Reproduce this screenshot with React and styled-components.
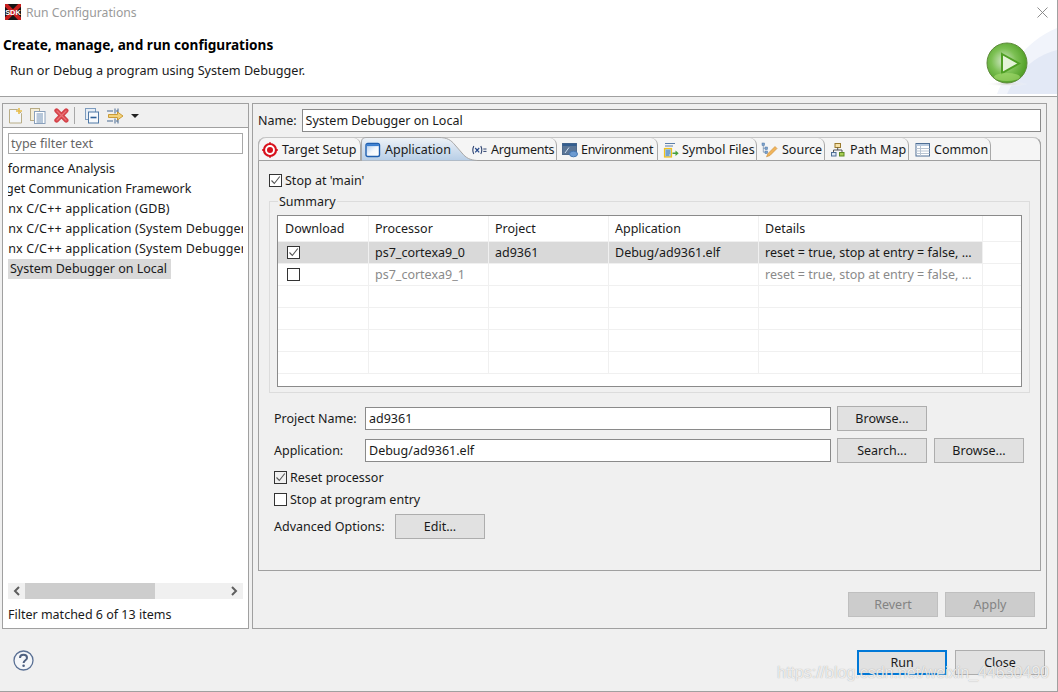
import React from "react";
import styled, { createGlobalStyle } from "styled-components";

const Global = createGlobalStyle`
  html, body { margin: 0; padding: 0; background: #f0f0f0; }
  #root { width: 1058px; height: 692px; overflow: hidden; }
  * { box-sizing: border-box; }
`;

const FONT = `"Noto Sans", "Open Sans", sans-serif`;

const Window = styled.div`
  position: relative;
  width: 1058px;
  height: 692px;
  display: flex;
  flex-direction: column;
  background: #f0f0f0;
  font: 12.5px/17px ${FONT};
  color: #1a1a1a;
  border-bottom: 1px solid #a0a0a0;
  border-right: 1px solid #a0a0a0;
`;

const TitleBar = styled.div`
  height: 28px;
  flex: none;
  display: flex;
  align-items: center;
  gap: 5px;
  padding: 0 0 4px 5px;
  background: #fff;
  color: #9a9a9a;
  font-size: 12.2px;
`;

const TitleText = styled.span`
  flex: 1;
`;

const CloseX = styled.svg`
  width: 11px;
  height: 11px;
  margin-right: 9px;
`;

const Banner = styled.div`
  position: relative;
  height: 69px;
  flex: none;
  padding: 8px 0 0 3px;
  background: #fff;
  border-bottom: 1px solid #a0a0a0;
  overflow: hidden;
`;

const BannerTitle = styled.div`
  font-weight: 700;
  font-size: 13.6px;
  color: #000;
  line-height: 17px;
`;

const BannerSub = styled.div`
  margin: 9px 0 0 7px;
  font-size: 12.65px;
  line-height: 17px;
`;

const BannerArt = styled.svg`
  position: absolute;
  right: 0;
  top: 0;
  width: 160px;
  height: 68px;
`;

const Body = styled.div`
  flex: none;
  height: 526px;
  margin-top: 6px;
  padding: 0 12px 0 2px;
  display: flex;
  gap: 3px;
`;

const LeftPanel = styled.div`
  width: 247px;
  flex: none;
  display: flex;
  flex-direction: column;
  background: #fff;
  border: 1px solid #a0a0a0;
`;

const Toolbar = styled.div`
  height: 24px;
  flex: none;
  display: flex;
  align-items: center;
  gap: 5px;
  padding: 0 0 0 6px;
  background: #f0f0f0;
  border-bottom: 1px solid #a0a0a0;
`;

const ToolSlot = styled.span`
  display: flex;
  align-items: center;
  flex: none;
  margin-left: ${(p) => p.$ml || 0}px;
`;

const ToolSep = styled.span`
  width: 1px;
  height: 17px;
  margin-right: 5px;
  background: #a8a8a8;
`;

const FilterBox = styled.div`
  height: 21px;
  margin: 5px 5px 0 5px;
  flex: none;
  padding: 0 2px;
  border: 1px solid #a9a9a9;
  color: #666;
  line-height: 19px;
  background: #fff;
`;

const Tree = styled.div`
  flex: 1;
  margin: 5px 5px 0 5px;
  overflow: hidden;
`;

const TreeRow = styled.div`
  height: 20px;
  line-height: 20px;
  white-space: nowrap;
  margin-left: ${(p) => p.$offset}px;
  letter-spacing: ${(p) => p.$spacing || 0}px;
`;

const SelectedLabel = styled.span`
  display: inline-block;
  height: 20px;
  padding: 0 4px 0 2px;
  background: #d9d9d9;
`;

const ScrollTrack = styled.div`
  position: relative;
  height: 16px;
  margin: 0 5px;
  padding: 0 5px;
  flex: none;
  display: flex;
  align-items: center;
  justify-content: space-between;
  background: #f0f0f0;
`;

const ScrollThumb = styled.div`
  position: absolute;
  left: 17px;
  width: 130px;
  height: 16px;
  background: #cdcdcd;
`;

const FilterStatus = styled.div`
  height: 29px;
  flex: none;
  padding: 7px 5px 0;
  line-height: 17px;
`;

const RightPanel = styled.div`
  flex: 1;
  display: flex;
  flex-direction: column;
  padding: 5px 5px 0 5px;
  border: 1px solid #a0a0a0;
`;

const NameRow = styled.div`
  display: flex;
  align-items: center;
  gap: 5px;
  height: 23px;
  flex: none;
`;

const Field = styled.div`
  flex: 1;
  height: 23px;
  padding: 0 3px;
  line-height: 21px;
  background: #fff;
  border: 1px solid #8a8a8a;
`;

const TabFolder = styled.div`
  flex: 1;
  margin-top: 5px;
  display: flex;
  flex-direction: column;
  border: 1px solid #a0a0a0;
  border-top: none;
  border-radius: 8px 8px 0 0;
`;

const TabStrip = styled.div`
  height: 24px;
  flex: none;
  display: flex;
  margin: 0 -1px;
  background: #f5f5f5;
  border-bottom: 1px solid #a0a0a0;
  border-top: 1px solid #c4c4c4;
  border-left: 1px solid #b4b4b4;
  border-right: 1px solid #a0a0a0;
  border-radius: 8px 8px 0 0;
`;

const Tab = styled.div`
  position: relative;
  flex: none;
  width: ${(p) => p.$w}px;
  height: 23px;
  display: flex;
  align-items: center;
  gap: ${(p) => p.$gap ?? 4}px;
  padding-left: ${(p) => p.$pad ?? 4}px;
  white-space: nowrap;
  letter-spacing: ${(p) => p.$ls || 0}px;
  border-right: 1px solid #a8a8a8;
  border-top-right-radius: 7px;
`;

const ActiveTab = styled(Tab)`
  border-right: none;
  margin-right: -15px;
`;

const ActiveShape = styled.svg`
  position: absolute;
  left: 0;
  top: -1px;
  width: 117px;
  height: 24px;
`;

const TabIconWrap = styled.span`
  position: relative;
  display: flex;
  align-items: center;
  gap: 4px;
`;

const Pane = styled.div`
  flex: 1;
  padding: 8px 10px 0 10px;
  display: flex;
  flex-direction: column;
`;

const CheckRow = styled.div`
  display: flex;
  align-items: center;
  gap: 3px;
  height: 22px;
  padding-left: ${(p) => p.$indent || 0}px;
  margin-top: ${(p) => p.$mt || 0}px;
  color: #1a1a1a;
`;

const Box = styled.span`
  width: 13px;
  height: 13px;
  flex: none;
  display: flex;
  align-items: center;
  justify-content: center;
  background: ${(p) => (p.$tinted ? "#f0f0f0" : "#fff")};
  border: 1px solid #333;
`;

const Group = styled.div`
  position: relative;
  margin-top: 10px;
  height: 192px;
  padding: 13px 7px 6px 7px;
  border: 1px solid #dcdcdc;
`;

const GroupLabel = styled.span`
  position: absolute;
  left: 8px;
  top: -9px;
  padding: 0 1px;
  background: #f0f0f0;
  line-height: 17px;
`;

const Table = styled.div`
  width: 745px;
  height: 172px;
  background: #fff;
  border: 1px solid #8a8a8a;
  overflow: hidden;
`;

const TableRow = styled.div`
  display: grid;
  grid-template-columns: 91px 120px 120px 150px 224px;
  height: ${(p) => p.$h || 22}px;
  border-bottom: 1px solid #f0f0f0;
  color: ${(p) => (p.$dim ? "#8a8a8a" : "#1a1a1a")};
`;

const Cell = styled.div`
  padding-left: ${(p) => p.$pad ?? 6}px;
  display: flex;
  align-items: center;
  white-space: nowrap;
  overflow: hidden;
  background: ${(p) => (p.$sel ? "#d9d9d9" : "transparent")};
  border-right: 1px solid #f0f0f0;
`;

const FormRow = styled.div`
  display: flex;
  align-items: center;
  height: 25px;
  padding-right: 6px;
  margin-top: ${(p) => p.$mt ?? 0}px;
`;

const FormLabel = styled.span`
  width: ${(p) => p.$w || 96}px;
  flex: none;
  padding-left: 5px;
`;

const ButtonGap = styled.span`
  width: 97px;
  flex: none;
`;

const Btn = styled.div`
  width: 90px;
  height: 25px;
  flex: none;
  display: flex;
  align-items: center;
  justify-content: center;
  margin-left: ${(p) => p.$ml ?? 0}px;
  background: ${(p) => (p.$off ? "#cccccc" : "#e1e1e1")};
  color: ${(p) => (p.$off ? "#838383" : "#1a1a1a")};
  border: ${(p) => (p.$primary ? "2px solid #0078d7" : p.$off ? "1px solid #bfbfbf" : "1px solid #adadad")};
`;

const PanelActions = styled.div`
  height: 57px;
  flex: none;
  display: flex;
  justify-content: flex-end;
  align-items: flex-start;
  gap: 7px;
  padding: 21px 6px 0 0;
`;

const Footer = styled.div`
  flex: 1;
  display: flex;
  align-items: flex-start;
  justify-content: space-between;
  padding: 21px 12px 0 13px;
`;

const FooterBtns = styled.div`
  display: flex;
  gap: 8px;
`;

const Watermark = styled.div`
  position: absolute;
  left: 777px;
  top: 664px;
  font: 16px/18px "Liberation Sans", sans-serif;
  color: rgba(255, 255, 255, 0.8);
  text-shadow: 0 0 1px rgba(110, 110, 110, 0.65);
  white-space: nowrap;
`;

const Icon = styled.svg`
  flex: none;
  display: block;
`;

const Check = () => (
  <svg width="11" height="11" viewBox="0 0 11 11">
    <path d="M1.5 5.5 L4.3 8.5 L9.8 1.5" fill="none" stroke="#555" strokeWidth="1.1" />
  </svg>
);

const TargetIcon = () => (
  <Icon width="16" height="16" viewBox="0 0 16 16">
    <circle cx="8" cy="8" r="6" fill="#fff" stroke="#d8111c" strokeWidth="2.2" />
    <circle cx="8" cy="8" r="3" fill="#d8111c" />
    <path d="M8 0v2M8 14v2M0 8h2M14 8h2" stroke="#d8111c" strokeWidth="1.3" />
  </Icon>
);

const AppIcon = () => (
  <Icon width="16" height="16" viewBox="0 0 16 16">
    <defs>
      <linearGradient id="appfill" x1="0" y1="0" x2="1" y2="1">
        <stop offset="0" stopColor="#a9c8ec" />
        <stop offset="0.55" stopColor="#f4f8fd" />
        <stop offset="1" stopColor="#ffffff" />
      </linearGradient>
    </defs>
    <rect x="1" y="1.5" width="13.5" height="13" rx="1.8" fill="url(#appfill)" stroke="#1f5fb0" strokeWidth="1.4" />
    <rect x="1.6" y="2.1" width="12.3" height="2" fill="#3a7ed0" />
  </Icon>
);

const ArgIcon = () => (
  <Icon width="16" height="16" viewBox="0 0 16 16">
    <path d="M2.8 4 Q0.8 8 2.8 12M9.8 4 Q11.8 8 9.8 12" fill="none" stroke="#2f4470" strokeWidth="1.1" />
    <path d="M4.2 6 L8.2 10.4M8.2 6 L4.2 10.4" stroke="#27498a" strokeWidth="1.2" />
    <path d="M12.3 7h3.2M12.3 9.4h3.2" stroke="#2f4470" />
  </Icon>
);

const EnvIcon = () => (
  <Icon width="16" height="16" viewBox="0 0 16 16">
    <rect x="0.5" y="1.5" width="14" height="11" fill="#5a7596" stroke="#4f6b8d" />
    <rect x="0.5" y="1.5" width="14" height="2.5" fill="#335d8e" />
    <path d="M3 11 L7 5.5" stroke="#cfe0f2" />
    <ellipse cx="11.5" cy="12" rx="4" ry="2.8" fill="#6d9bd1" stroke="#4678b2" />
  </Icon>
);

const SymbolIcon = () => (
  <Icon width="16" height="16" viewBox="0 0 16 16">
    <path d="M2 1.5h10M2 4h8" stroke="#5c7ea8" />
    <rect x="1.5" y="6.5" width="7" height="8.5" fill="#9cc4e8" stroke="#f3c21a" strokeWidth="1.2" />
    <path d="M3 9h4M3 11h4M3 13h3" stroke="#3e6ea8" strokeWidth="0.8" />
    <path d="M9.5 10.5h3V8.5l3.2 2.7-3.2 2.7v-2h-3z" fill="#49a03c" />
  </Icon>
);

const SourceIcon = () => (
  <Icon width="17" height="16" viewBox="0 0 17 16">
    <rect x="1" y="1" width="2.6" height="2.6" fill="#7ea3cc" stroke="#4f78a8" strokeWidth="0.5" />
    <rect x="4" y="5" width="2.6" height="2.6" fill="#7ea3cc" stroke="#4f78a8" strokeWidth="0.5" />
    <rect x="4" y="9" width="2.6" height="2.6" fill="#7ea3cc" stroke="#4f78a8" strokeWidth="0.5" />
    <path d="M2.3 3.5V10.2H4M2.3 6.3H4" fill="none" stroke="#6a87ab" strokeWidth="0.7" />
    <path d="M5.5 14.8 L7 11.5 L14 4.5 L16 6.5 L9 13.5 Z" fill="#f0b45a" stroke="#c98a35" strokeWidth="0.6" />
  </Icon>
);

const PathIcon = () => (
  <Icon width="16" height="16" viewBox="0 0 16 16">
    <rect x="5" y="1.5" width="5.5" height="4" fill="#f6e2a8" stroke="#9a7a2e" />
    <path d="M7.7 5.5V8M3.5 11V8H12V11" fill="none" stroke="#555" />
    <rect x="1.5" y="10.5" width="4.5" height="3.5" fill="#dbe6f2" stroke="#4f6f96" />
    <rect x="9.5" y="10.5" width="4.5" height="3.5" fill="#a8cc55" stroke="#5d8a1f" />
  </Icon>
);

const CommonIcon = () => (
  <Icon width="16" height="16" viewBox="0 0 16 16">
    <rect x="1" y="1.5" width="13.5" height="12.5" fill="#fff" stroke="#4f6f96" />
    <rect x="1.5" y="2" width="12.5" height="2" fill="#b9cbe0" />
    <path d="M1 6.5h13.5M1 9h13.5M1 11.5h13.5M5.5 4v10" stroke="#b8c4d2" />
  </Icon>
);

const NewIcon = () => (
  <Icon width="16" height="16" viewBox="0 0 16 16">
    <path d="M0.5 1.5h8l4 4v9.5h-12z" fill="#f4f7fb" stroke="#b9ad87" />
    <path d="M10 0v6M7 3h6" stroke="#e6bd4e" strokeWidth="1.6" />
  </Icon>
);

const DupIcon = () => (
  <Icon width="16" height="16" viewBox="0 0 16 16">
    <rect x="0.5" y="0.5" width="9" height="12" fill="#f3edd8" stroke="#b7ab85" />
    <rect x="4.5" y="3.5" width="10.5" height="12" fill="#fff" stroke="#8aa0bb" />
    <path d="M6.5 6h6.5M6.5 8h6.5M6.5 10h6.5M6.5 12h6.5M6.5 14h6.5" stroke="#6f8fb4" />
  </Icon>
);

const DeleteIcon = () => (
  <Icon width="15" height="15" viewBox="0 0 15 15">
    <path d="M2.6 2.6 L12.2 12.4 M12.2 2.6 L2.6 12.4" stroke="#d5434a" strokeWidth="4.6" strokeLinecap="round" />
    <path d="M3 3 L12 12 M12 3 L3 12" stroke="#ea7276" strokeWidth="1.4" strokeLinecap="round" />
  </Icon>
);

const CollapseIcon = () => (
  <Icon width="14" height="16" viewBox="0 0 14 16">
    <rect x="0.5" y="0.5" width="10" height="11" fill="#e7eef6" stroke="#7d9cbf" />
    <rect x="3.5" y="4" width="10" height="11" fill="#f7f9fc" stroke="#4f78a6" />
    <path d="M5.5 9.5h6" stroke="#2f5f96" strokeWidth="1.6" />
  </Icon>
);

const LinkIcon = () => (
  <Icon width="17" height="16" viewBox="0 0 17 16">
    <path d="M0 3h6M0 13h6M8 0.5v5M8 10.5v5M11 0.5v5M11 10.5v5" stroke="#496a92" />
    <path d="M11 3H9M11 13H9" stroke="#496a92" />
    <path d="M1.5 6.5h9V4l5.5 4-5.5 4v-2.5h-9z" fill="#f3d27a" stroke="#c5932a" strokeWidth="0.9" />
  </Icon>
);

const Caret = styled.span`
  display: block;
  width: 0;
  height: 0;
  border-left: 4px solid transparent;
  border-right: 4px solid transparent;
  border-top: 4px solid #222;
`;

const Chevron = ({ left }) => (
  <Icon width="8" height="10" viewBox="0 0 8 10">
    <path d={left ? "M6 1 L2 5 L6 9" : "M2 1 L6 5 L2 9"} fill="none" stroke="#5f5f5f" strokeWidth="2" />
  </Icon>
);

const HelpIcon = () => (
  <Icon width="21" height="21" viewBox="0 0 21 21">
    <circle cx="10.5" cy="10.5" r="9.5" fill="#f4f6f9" stroke="#5a7094" strokeWidth="1.3" />
    <path d="M7 8 C7 3.8 14 3.8 14 8 C14 10.4 10.6 10.2 10.6 13" fill="none" stroke="#4d5f7f" strokeWidth="2" />
    <circle cx="10.6" cy="15.8" r="1.3" fill="#4d5f7f" />
  </Icon>
);

const SdkLogo = () => (
  <Icon width="16" height="16" viewBox="0 0 16 16">
    <rect width="16" height="16" fill="#151515" />
    <path d="M0 0 L16 16 M16 0 L0 16" stroke="#c8201f" strokeWidth="4" />
    <text x="8" y="10.8" fontFamily="Liberation Sans" fontSize="7.4" fontWeight="700" textAnchor="middle" fill="#fff">SDK</text>
  </Icon>
);

const Art = () => (
  <BannerArt viewBox="0 0 160 68">
    <defs>
      <radialGradient id="g" cx="0.42" cy="0.45" r="0.62">
        <stop offset="0" stopColor="#d6e8cd" />
        <stop offset="0.5" stopColor="#7cc053" />
        <stop offset="1" stopColor="#4a9a20" />
      </radialGradient>
      <radialGradient id="sh" cx="0.5" cy="0.5" r="0.5">
        <stop offset="0" stopColor="#cfcfcf" />
        <stop offset="1" stopColor="#ffffff" stopOpacity="0" />
      </radialGradient>
    </defs>
    <path d="M100 66 C110 40 130 12 160 0 L160 66 Z" fill="#f1f4fb" />
    <path d="M110 66 C118 48 135 28 160 22 L160 66 Z" fill="#e3e9f6" />
    <ellipse cx="110" cy="56" rx="21" ry="2.5" fill="url(#sh)" />
    <circle cx="110" cy="35" r="20" fill="url(#g)" stroke="#5d8a3a" />
    <path d="M105 26 L122 35.5 L105 45 Z" fill="#e4f3d8" stroke="#4f9f24" strokeWidth="2" />
    <ellipse cx="110" cy="49" rx="13" ry="4" fill="#a6dc6f" opacity="0.6" />
  </BannerArt>
);

const emptyRows = [0, 1, 2, 3];
const XILINX = { $offset: -17.4, $spacing: 0.15 };

export default function App() {
  return (
    <Window>
      <Global />
      <TitleBar>
        <SdkLogo />
        <TitleText>Run Configurations</TitleText>
        <CloseX viewBox="0 0 11 11">
          <path d="M0.5 0.5 L10.5 10.5 M10.5 0.5 L0.5 10.5" stroke="#808080" strokeWidth="0.9" />
        </CloseX>
      </TitleBar>
      <Banner>
        <Art />
        <BannerTitle>Create, manage, and run configurations</BannerTitle>
        <BannerSub>Run or Debug a program using System Debugger.</BannerSub>
      </Banner>
      <Body>
        <LeftPanel>
          <Toolbar>
            <NewIcon />
            <DupIcon />
            <ToolSlot $ml={3}><DeleteIcon /></ToolSlot>
            <ToolSep />
            <CollapseIcon />
            <ToolSlot $ml={3}><LinkIcon /></ToolSlot>
            <ToolSlot $ml={2}><Caret /></ToolSlot>
          </Toolbar>
          <FilterBox>type filter text</FilterBox>
          <Tree>
            <TreeRow $offset={-20}>Performance Analysis</TreeRow>
            <TreeRow $offset={-20}>Target Communication Framework</TreeRow>
            <TreeRow {...XILINX}>Xilinx C/C++ application (GDB)</TreeRow>
            <TreeRow {...XILINX}>Xilinx C/C++ application (System Debugger)</TreeRow>
            <TreeRow {...XILINX}>Xilinx C/C++ application (System Debugger on QEMU)</TreeRow>
            <TreeRow $offset={0}><SelectedLabel>System Debugger on Local</SelectedLabel></TreeRow>
          </Tree>
          <ScrollTrack>
            <Chevron left />
            <ScrollThumb />
            <Chevron />
          </ScrollTrack>
          <FilterStatus>Filter matched 6 of 13 items</FilterStatus>
        </LeftPanel>
        <RightPanel>
          <NameRow>
            Name:
            <Field>System Debugger on Local</Field>
          </NameRow>
          <TabFolder>
            <TabStrip>
              <Tab $w={102} $pad={3}><TargetIcon />Target Setup</Tab>
              <ActiveTab $w={116} $pad={4}>
                <ActiveShape viewBox="0 0 117 24">
                  <defs>
                    <linearGradient id="tabfill" x1="0" y1="0" x2="0" y2="1">
                      <stop offset="0" stopColor="#eef2f7" />
                      <stop offset="1" stopColor="#b6cde6" />
                    </linearGradient>
                  </defs>
                  <path d="M0.5 24 V5 Q0.5 0.5 5 0.5 H78 C86 0.5 90 3 94 8 L101 16 C105 21 109 23 116 23.5 V24 Z" fill="url(#tabfill)" stroke="#a8a8a8" strokeWidth="1" />
                </ActiveShape>
                <TabIconWrap><AppIcon />Application</TabIconWrap>
              </ActiveTab>
              <Tab $w={95} $pad={9} $ls={-0.25}><ArgIcon />Arguments</Tab>
              <Tab $w={101} $pad={5} $gap={3} $ls={-0.3}><EnvIcon />Environment</Tab>
              <Tab $w={99} $pad={5} $gap={3}><SymbolIcon />Symbol Files</Tab>
              <Tab $w={68}><SourceIcon />Source</Tab>
              <Tab $w={84} $pad={5}><PathIcon />Path Map</Tab>
              <Tab $w={82} $pad={6} $gap={3}><CommonIcon />Common</Tab>
            </TabStrip>
            <Pane>
              <CheckRow><Box><Check /></Box>Stop at 'main'</CheckRow>
              <Group>
                <GroupLabel>Summary</GroupLabel>
                <Table>
                  <TableRow $h={26}>
                    <Cell $pad={7}>Download</Cell>
                    <Cell>Processor</Cell>
                    <Cell>Project</Cell>
                    <Cell>Application</Cell>
                    <Cell>Details</Cell>
                  </TableRow>
                  <TableRow>
                    <Cell $sel $pad={9}><Box><Check /></Box></Cell>
                    <Cell $sel>ps7_cortexa9_0</Cell>
                    <Cell $sel>ad9361</Cell>
                    <Cell $sel>Debug/ad9361.elf</Cell>
                    <Cell $sel>reset = true, stop at entry = false, ...</Cell>
                  </TableRow>
                  <TableRow $dim>
                    <Cell $pad={9}><Box /></Cell>
                    <Cell>ps7_cortexa9_1</Cell>
                    <Cell />
                    <Cell />
                    <Cell>reset = true, stop at entry = false, ...</Cell>
                  </TableRow>
                  {emptyRows.map((i) => (
                    <TableRow key={i}>
                      <Cell /><Cell /><Cell /><Cell /><Cell />
                    </TableRow>
                  ))}
                </Table>
              </Group>
              <FormRow $mt={13}>
                <FormLabel>Project Name:</FormLabel>
                <Field>ad9361</Field>
                <Btn $ml={6}>Browse...</Btn>
                <ButtonGap />
              </FormRow>
              <FormRow $mt={7}>
                <FormLabel>Application:</FormLabel>
                <Field>Debug/ad9361.elf</Field>
                <Btn $ml={6}>Search...</Btn>
                <Btn $ml={7}>Browse...</Btn>
              </FormRow>
              <CheckRow $indent={5} $mt={3}><Box $tinted><Check /></Box>Reset processor</CheckRow>
              <CheckRow $indent={5}><Box />Stop at program entry</CheckRow>
              <FormRow $mt={4}>
                <FormLabel $w={126}>Advanced Options:</FormLabel>
                <Btn>Edit...</Btn>
              </FormRow>
            </Pane>
          </TabFolder>
          <PanelActions>
            <Btn $off>Revert</Btn>
            <Btn $off>Apply</Btn>
          </PanelActions>
        </RightPanel>
      </Body>
      <Footer>
        <HelpIcon />
        <FooterBtns>
          <Btn $primary>Run</Btn>
          <Btn>Close</Btn>
        </FooterBtns>
      </Footer>
      <Watermark>https://blog.csdn.net/weixin_44630490</Watermark>
    </Window>
  );
}
